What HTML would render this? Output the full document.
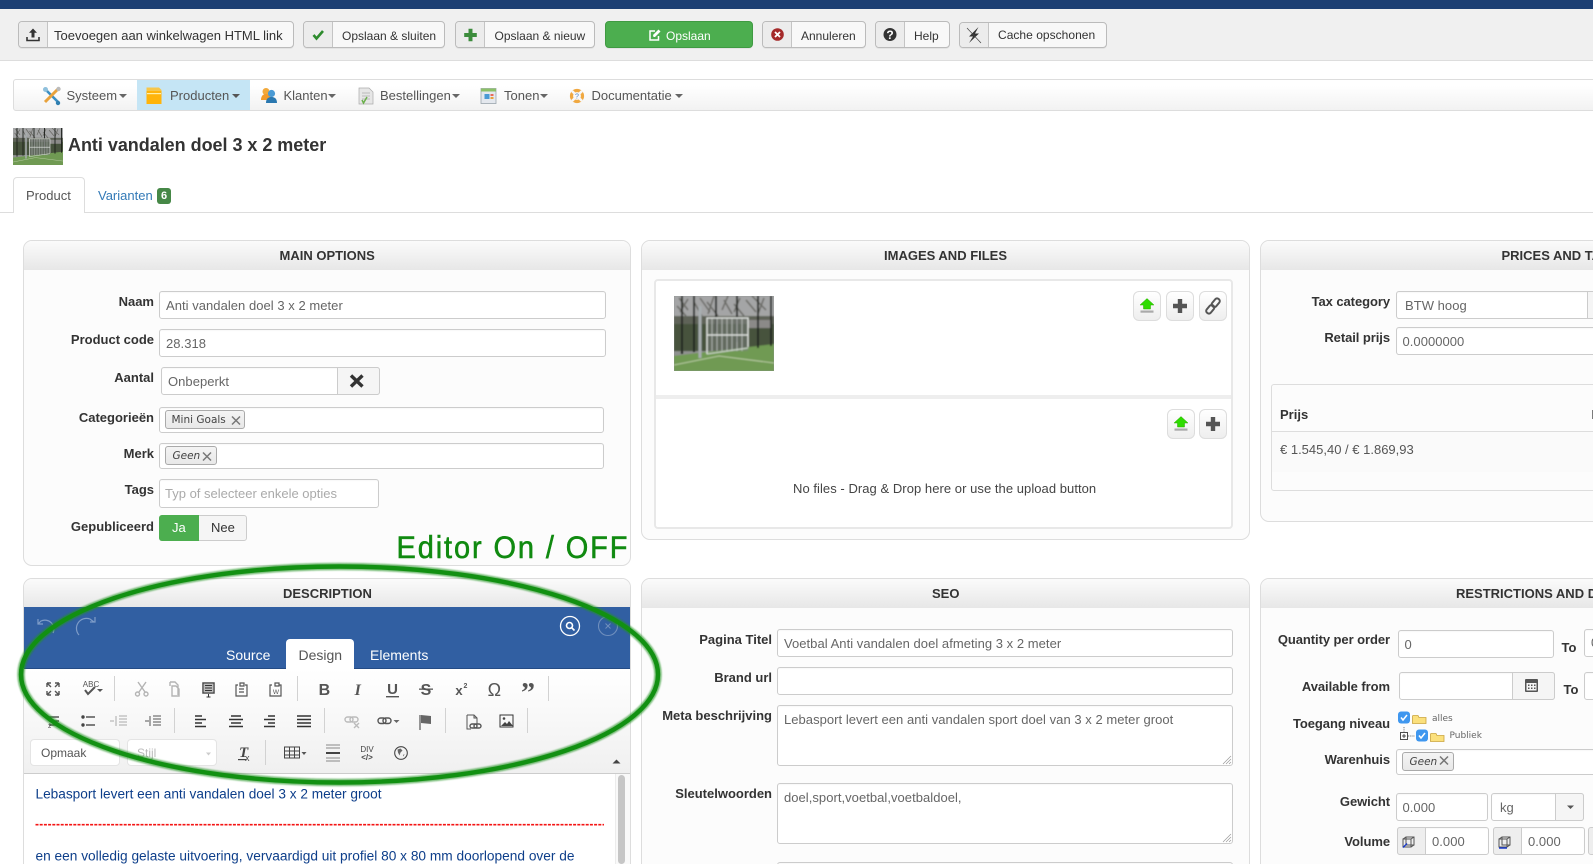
<!DOCTYPE html>
<html lang="nl"><head><meta charset="utf-8"><title>Anti vandalen doel 3 x 2 meter</title>
<style>
html,body{margin:0;padding:0;background:#fff;width:1593px;height:864px;overflow:hidden}
body{font-family:"Liberation Sans",Arial,sans-serif;font-size:13px;color:#333}
div,span{position:absolute;box-sizing:border-box}
#r{left:0;top:0;width:1593px;height:864px;overflow:hidden;background:#fff}
.t{white-space:nowrap;line-height:20px;height:20px}
.btn{height:27px;top:21px;border:1px solid #bbb;border-radius:4px;background:#f8f8f8;box-shadow:0 1px 0 rgba(0,0,0,.05)}
.ic{left:0;top:0;bottom:0;width:29px;background:#ececec;border-right:1px solid #c4c4c4;border-radius:3px 0 0 3px}
.p{border:1px solid #ddd;border-radius:9px;background:#fcfcfc;overflow:hidden}
.h{left:0;right:0;top:0;height:28.5px;background:linear-gradient(#fbfbfb,#e7e7e7)}
.ht{top:5px;font-weight:bold;color:#333;line-height:20px;white-space:nowrap}
.i{border:1px solid #ccc;border-radius:3px;background:#fff;box-shadow:inset 0 1px 1px rgba(0,0,0,.03)}
.l{font-weight:bold;text-align:right;color:#333}
.lr{letter-spacing:-.07px}
.v{color:#666;letter-spacing:.04px}
.tag{border:1px solid #aaa;border-radius:3px;background:linear-gradient(#f4f4f4,#e8e8e8);font-family:"DejaVu Sans",sans-serif;font-size:10.5px;line-height:18px;color:#444;white-space:nowrap}
.sb{width:28px;height:30px;border:1px solid #ddd;border-radius:6px;background:linear-gradient(#fff,#eee)}
.nv{color:#555}
.sep{width:1px;height:25px;background:#d2d2d2}
</style></head>
<body>
<div id="r">
<!-- top -->
<div style="left:0;top:0;width:1593px;height:9px;background:#1c3f73"></div>
<div style="left:0;top:9px;width:1593px;height:52px;background:#f0f0f0;border-bottom:1px solid #ddd"></div>

<div class="btn" style="left:18px;width:276px"><div class="ic"></div></div>
<span class="t" style="left:54px;top:26px;font-size:13px;color:#333">Toevoegen aan winkelwagen HTML link</span>
<div class="btn" style="left:303px;width:142px"><div class="ic"></div></div>
<span class="t" style="left:342px;top:26px;font-size:12px;color:#333">Opslaan &amp; sluiten</span>
<div class="btn" style="left:455px;width:140px"><div class="ic"></div></div>
<span class="t" style="left:494.5px;top:26px;font-size:12px;color:#333">Opslaan &amp; nieuw</span>
<div class="btn" style="left:605px;width:148px;background:#4cae4f;border-color:#3f9a42"></div>
<span class="t" style="left:666px;top:26px;font-size:12px;color:#fff">Opslaan</span>
<div class="btn" style="left:762px;width:104px"><div class="ic"></div></div>
<span class="t" style="left:801px;top:26px;font-size:12px;color:#333">Annuleren</span>
<div class="btn" style="left:875px;width:75px"><div class="ic"></div></div>
<span class="t" style="left:914px;top:26px;font-size:12px;color:#333">Help</span>
<div class="btn" style="left:959px;width:148px;top:22px;height:26px"><div class="ic"></div></div>
<span class="t" style="left:998px;top:24.5px;font-size:12px;letter-spacing:.03px;color:#333">Cache opschonen</span>

<!-- nav -->
<div style="left:13px;top:79px;width:1600px;height:32px;border:1px solid #ddd;border-radius:3px 0 0 3px;background:linear-gradient(#fff 20%,#f2f2f2)"></div>
<div style="left:137px;top:80px;width:113px;height:30px;background:#c5e5f5"></div>
<span class="t nv" style="left:66.5px;top:85.5px">Systeem</span>
<span class="t nv" style="left:170px;top:85.5px">Producten</span>
<span class="t nv" style="left:283.5px;top:85.5px">Klanten</span>
<span class="t nv" style="left:380px;top:85.5px">Bestellingen</span>
<span class="t nv" style="left:504px;top:85.5px">Tonen</span>
<span class="t nv" style="left:591.5px;top:85.5px">Documentatie</span>

<!-- title -->
<span class="t" style="left:68px;top:135px;font-size:18px;font-weight:bold;letter-spacing:-.03px;color:#333">Anti vandalen doel 3 x 2 meter</span>
<div style="left:0;top:212px;width:1593px;height:1px;background:#ddd"></div>
<div style="left:13px;top:177px;width:72px;height:36px;background:#fff;border:1px solid #ddd;border-bottom:0;border-radius:4px 4px 0 0"></div>
<span class="t" style="left:26px;top:186px;color:#555">Product</span>
<span class="t" style="left:98px;top:186px;color:#337ab7">Varianten</span>
<div style="left:157px;top:188px;width:14px;height:16px;background:#468847;border-radius:3px;color:#fff;font-size:11px;font-weight:bold;line-height:16px;text-align:center">6</div>

<!-- MAIN OPTIONS -->
<div class="p" style="left:23px;top:240px;width:608px;height:326px"><div class="h"></div></div>
<span class="ht" style="left:279.5px;top:246px">MAIN OPTIONS</span>
<div class="t l" style="left:30px;width:124px;top:292px">Naam</div>
<div class="t l" style="left:30px;width:124px;top:330px">Product code</div>
<div class="t l" style="left:30px;width:124px;top:368px">Aantal</div>
<div class="t l" style="left:30px;width:124px;top:408px">Categorieën</div>
<div class="t l" style="left:30px;width:124px;top:443.5px">Merk</div>
<div class="t l" style="left:30px;width:124px;top:480px">Tags</div>
<div class="t l" style="left:30px;width:124px;top:517px">Gepubliceerd</div>
<div class="i" style="left:159px;top:291px;width:447px;height:28px"></div>
<span class="t v" style="left:166px;top:295.5px">Anti vandalen doel 3 x 2 meter</span>
<div class="i" style="left:159px;top:329px;width:447px;height:28px"></div>
<span class="t v" style="left:166px;top:333.5px">28.318</span>
<div class="i" style="left:161px;top:367px;width:219px;height:28px"></div>
<div style="left:337px;top:367px;width:43px;height:28px;background:#f5f5f5;border:1px solid #ccc;border-radius:0 3px 3px 0"></div>
<span class="t v" style="left:168px;top:371.5px">Onbeperkt</span>
<div class="i" style="left:159px;top:407px;width:445px;height:26px"></div>
<div class="tag" style="left:165px;top:410px;width:80px;height:19px;padding-left:5.5px">Mini Goals</div>
<div class="i" style="left:159px;top:443px;width:445px;height:26px"></div>
<div class="tag" style="left:165px;top:446px;width:52px;height:19px;padding-left:6.5px;font-style:italic">Geen</div>
<div class="i" style="left:159px;top:479px;width:220px;height:29px"></div>
<span class="t" style="left:165px;top:483.5px;color:#aaa">Typ of selecteer enkele opties</span>
<div style="left:159px;top:515px;width:88px;height:26px;border:1px solid #ccc;border-radius:3px;background:#f5f5f5"></div>
<div style="left:159px;top:515px;width:40px;height:26px;background:#4cae4f;border-radius:3px 0 0 3px"></div>
<span class="t" style="left:172px;top:518px;color:#fff">Ja</span>
<span class="t" style="left:211px;top:518px;color:#333">Nee</span>

<!-- IMAGES -->
<div class="p" style="left:641px;top:240px;width:609px;height:300px"><div class="h"></div></div>
<span class="ht" style="left:884px;top:246px">IMAGES AND FILES</span>
<div style="left:654px;top:279px;width:579px;height:250px;background:#fff;border:2px solid #e8e8e8;border-radius:4px"></div>
<div style="left:656px;top:395px;width:575px;height:4px;background:#eee"></div>
<div class="sb" style="left:1133px;top:291px"></div>
<div class="sb" style="left:1166px;top:291px"></div>
<div class="sb" style="left:1199px;top:291px"></div>
<div class="sb" style="left:1167px;top:409px"></div>
<div class="sb" style="left:1199px;top:409px"></div>
<span class="t" style="left:793px;top:478.5px;color:#444;letter-spacing:.05px">No files - Drag &amp; Drop here or use the upload button</span>

<!-- PRICES -->
<div class="p" style="left:1260px;top:240px;width:620px;height:282px"><div class="h"></div></div>
<span class="ht" style="left:1501.5px;top:246px">PRICES AND TAXES</span>
<div class="t l lr" style="left:1270px;width:120px;top:292px">Tax category</div>
<div class="t l lr" style="left:1270px;width:120px;top:328px">Retail prijs</div>
<div class="i" style="left:1396px;top:291px;width:300px;height:28px"></div>
<div style="left:1587px;top:291px;width:20px;height:28px;background:#f5f5f5;border-left:1px solid #ccc;border-top:1px solid #ccc;border-bottom:1px solid #ccc"></div>
<span class="t v" style="left:1405px;top:295.5px">BTW hoog</span>
<div class="i" style="left:1396px;top:327px;width:300px;height:28px"></div>
<span class="t v" style="left:1402.5px;top:331.5px">0.0000000</span>
<div style="left:1271px;top:384px;width:400px;height:107px;border:1px solid #ddd;border-radius:3px"></div>
<div style="left:1272px;top:431px;width:400px;height:41px;background:#fafafa;border-top:1px solid #ddd"></div>
<span class="t" style="left:1280px;top:404.5px;font-weight:bold">Prijs</span>
<span class="t" style="left:1591.5px;top:404.5px;font-weight:bold">Korting</span>
<span class="t" style="left:1280px;top:439.5px;color:#555">€ 1.545,40 / € 1.869,93</span>

<!-- DESCRIPTION -->
<div class="p" style="left:23px;top:578px;width:608px;height:300px;background:#fff"><div class="h"></div></div>
<span class="ht" style="left:283px;top:583.5px">DESCRIPTION</span>
<div style="left:24px;top:607px;width:606px;height:62px;background:#315fa2;border-bottom:1px solid #244b85"></div>
<span class="t" style="left:226px;top:645px;font-size:14px;color:#fff">Source</span>
<div style="left:286px;top:639px;width:68px;height:30px;background:#fff;border-radius:4px 4px 0 0"></div>
<span class="t" style="left:298.5px;top:645px;font-size:14px;color:#555">Design</span>
<span class="t" style="left:370px;top:645px;font-size:14px;color:#fff">Elements</span>
<div style="left:24px;top:669px;width:606px;height:105px;background:linear-gradient(#fff,#f0f0f0);border-bottom:1px solid #ccc"></div>
<div class="sep" style="left:113.5px;top:676px"></div>
<div class="sep" style="left:296.5px;top:676px"></div>
<div class="sep" style="left:547.5px;top:676px"></div>
<div class="sep" style="left:174px;top:708px"></div>
<div class="sep" style="left:323.5px;top:708px"></div>
<div class="sep" style="left:445px;top:708px"></div>
<div class="sep" style="left:526.5px;top:708px"></div>
<div class="sep" style="left:264.5px;top:740px"></div>
<div style="left:29.5px;top:739px;width:90px;height:27px;background:#fff;border:1px solid #e4e4e4;border-radius:4px"></div>
<span class="t" style="left:41px;top:742.5px;font-size:12px;color:#555">Opmaak</span>
<div style="left:126.5px;top:739px;width:90px;height:27px;background:#fff;border:1px solid #e4e4e4;border-radius:4px"></div>
<span class="t" style="left:137px;top:742.5px;font-size:12px;color:#bbb">Stijl</span>
<div style="left:615px;top:774px;width:15px;height:90px;background:#f9f9f9;border-left:1px solid #ececec"></div>
<div style="left:618px;top:775px;width:7px;height:89px;background:#c6c6c6;border-radius:4px"></div>

<!-- SEO -->
<div class="p" style="left:641px;top:578px;width:609px;height:300px"><div class="h"></div></div>
<span class="ht" style="left:932px;top:583.5px">SEO</span>
<div class="t l" style="left:650px;width:122px;top:630px">Pagina Titel</div>
<div class="t l" style="left:650px;width:122px;top:668px">Brand url</div>
<div class="t l" style="left:650px;width:122px;top:706px">Meta beschrijving</div>
<div class="t l" style="left:650px;width:122px;top:784px">Sleutelwoorden</div>
<div class="i" style="left:777px;top:629px;width:455.5px;height:28px"></div>
<span class="t v" style="left:784px;top:633.5px">Voetbal Anti vandalen doel afmeting 3 x 2 meter</span>
<div class="i" style="left:777px;top:667px;width:455.5px;height:28px"></div>
<div class="i" style="left:777px;top:705px;width:455.5px;height:61px"></div>
<span class="t v" style="left:784px;top:709.5px">Lebasport levert een anti vandalen sport doel van 3 x 2 meter groot</span>
<div class="i" style="left:777px;top:783px;width:455.5px;height:61px"></div>
<span class="t v" style="left:784px;top:787.5px">doel,sport,voetbal,voetbaldoel,</span>
<div class="i" style="left:777px;top:861.500px;width:455.5px;height:30px"></div>

<!-- RESTRICTIONS -->
<div class="p" style="left:1260px;top:578px;width:620px;height:300px"><div class="h"></div></div>
<span class="ht" style="left:1456px;top:583.5px">RESTRICTIONS AND DISCOUNTS</span>
<div class="t l lr" style="left:1260px;width:130px;top:630px">Quantity per order</div>
<div class="t l lr" style="left:1260px;width:130px;top:677px">Available from</div>
<div class="t l lr" style="left:1260px;width:130px;top:714px">Toegang niveau</div>
<div class="t l lr" style="left:1260px;width:130px;top:750px">Warenhuis</div>
<div class="t l lr" style="left:1260px;width:130px;top:792px">Gewicht</div>
<div class="t l lr" style="left:1260px;width:130px;top:832px">Volume</div>
<div class="i" style="left:1398px;top:630px;width:156px;height:28px"></div>
<span class="t v" style="left:1404.5px;top:634.5px">0</span>
<span class="t" style="left:1561.5px;top:638px;font-weight:bold">To</span>
<div class="i" style="left:1584px;top:629px;width:100px;height:28px"></div>
<span class="t v" style="left:1591px;top:633px">0</span>
<div class="i" style="left:1399px;top:672px;width:156px;height:28px"></div>
<div style="left:1512px;top:672px;width:43px;height:28px;background:#f5f5f5;border:1px solid #ccc;border-radius:0 3px 3px 0"></div>
<span class="t" style="left:1563.5px;top:680px;font-weight:bold">To</span>
<div class="i" style="left:1584px;top:672px;width:100px;height:28px"></div>
<span class="t" style="left:1432px;top:708.5px;font-family:'DejaVu Sans',sans-serif;font-size:9px;color:#666">alles</span>
<span class="t" style="left:1449.5px;top:725.5px;font-family:'DejaVu Sans',sans-serif;font-size:9px;color:#666">Publiek</span>
<div class="i" style="left:1396px;top:749px;width:300px;height:26px"></div>
<div class="tag" style="left:1402px;top:752px;width:52px;height:19px;padding-left:6.5px;font-style:italic">Geen</div>
<div class="i" style="left:1396px;top:793px;width:92px;height:28px"></div>
<span class="t v" style="left:1402.5px;top:797.5px">0.000</span>
<div class="i" style="left:1491px;top:793px;width:93px;height:28px"></div>
<div style="left:1555px;top:793px;width:29px;height:28px;background:#f5f5f5;border:1px solid #ccc;border-radius:0 3px 3px 0"></div>
<span class="t v" style="left:1500px;top:797.5px">kg</span>
<div class="i" style="left:1397px;top:827px;width:92px;height:28px"></div>
<div style="left:1397px;top:827px;width:29px;height:28px;background:#eee;border:1px solid #ccc;border-radius:3px 0 0 3px"></div>
<span class="t v" style="left:1432px;top:831.5px">0.000</span>
<div class="i" style="left:1493px;top:827px;width:92px;height:28px"></div>
<div style="left:1493px;top:827px;width:29px;height:28px;background:#eee;border:1px solid #ccc;border-radius:3px 0 0 3px"></div>
<span class="t v" style="left:1528px;top:831.5px">0.000</span>
<div style="left:1588px;top:827px;width:29px;height:28px;background:#eee;border:1px solid #ccc;border-radius:3px 0 0 3px"></div>

<!-- icons / overlay -->
<svg width="1593" height="864" viewBox="0 0 1593 864" style="position:absolute;left:0;top:0" xmlns="http://www.w3.org/2000/svg">
<defs>
<filter id="bl" x="-5%" y="-5%" width="110%" height="110%"><feGaussianBlur stdDeviation=".7"/></filter>
<filter id="sf" x="-5%" y="-10%" width="110%" height="120%"><feGaussianBlur stdDeviation=".9"/></filter>
<symbol id="goal" viewBox="0 0 100 75" preserveAspectRatio="none">
 <rect width="100" height="75" fill="#8f9290"/>
 <g filter="url(#bl)">
 <rect y="0" width="100" height="20" fill="#a4a5a6"/>
 <path d="M5 2L14 14M14 3L6 16M26 2L36 16M40 0L34 18M50 4L58 18M66 2L60 16M72 4L82 16M90 2L84 18M20 6L28 20M54 0L48 14M3 10L12 20M33 6L44 20M60 8L70 20M78 0L92 14" stroke="#55564f" stroke-width="1.500" stroke-opacity=".75"/>
 <rect y="20" width="100" height="10" fill="#5f6459"/>
 <rect y="28" width="100" height="27" fill="#47533d"/>
 <rect x="74" y="24" width="24" height="8" fill="#8b8a88"/>
 <path d="M0 60L33 56L100 48V75H0Z" fill="#6f9a52"/>
 <path d="M0 69L45 60M45 60L100 67" stroke="#c9d6b4" stroke-width=".8" fill="none"/>
 <path d="M8 0V58M20 0V56M42 0V36M63 0V46M84 0V52M97 0V50" stroke="#1d211c" stroke-width="1.800"/>
 <path d="M26 10V62" stroke="#a8aeb0" stroke-width="3"/>
 <rect x="33" y="22" width="41" height="33" fill="#7d827f" fill-opacity=".5"/>
 <path d="M38 22V55M43 22V55M48 22V55M53 22V55M58 22V55M63 22V55M68 22V55" stroke="#bfc3c0" stroke-width=".8"/>
 <path d="M33 58V22H74V51M33 39H74" stroke="#e4e7e4" stroke-width="1.300" fill="none"/>
 <path d="M74 52L33 58" stroke="#d6dad6" stroke-width="1"/>
 </g>
</symbol>
<g id="upg"><path d="M0-7.500L7-1H3.500V3H-3.500V-1H-7Z" fill="#2edc00" stroke="#2aa800" stroke-width=".5"/><rect x="-6.500" y="4.500" width="13" height="2.200" fill="#aaa"/></g>
<path id="plusg" d="M-2.200-7H2.200V-2.200H7V2.200H2.200V7H-2.200V2.200H-7V-2.200H-2.200Z"/>
</defs>

<use href="#goal" x="13" y="128" width="50" height="37"/>
<use href="#goal" x="674" y="296" width="100" height="75"/>

<!-- toolbar icons -->
<g transform="translate(33,35)"><path d="M0-6.500L-4-2.200H-1.500V2.500H1.500V-2.200H4Z" fill="#333"/><path d="M-6 2V5.500H6V2" fill="none" stroke="#333" stroke-width="1.600"/></g>
<path d="M313.500 35L316.500 38.500L323 31" fill="none" stroke="#2e8b2e" stroke-width="2.600"/>
<use href="#plusg" transform="translate(470.500,35) scale(.9)" fill="#3c8c3c"/>
<g transform="translate(655,35)" fill="none" stroke="#fff"><path d="M3.500 1V5H-5V-4H0" stroke-width="1.500"/><path d="M-1.500 2L-2 0L3.500-5.500L5.500-3.500L0 2Z" fill="#fff" stroke="none"/></g>
<circle cx="777.500" cy="34.500" r="6.300" fill="#a52a2a"/><path d="M775 32L780 37M780 32L775 37" stroke="#fff" stroke-width="1.800"/>
<circle cx="890" cy="34.500" r="6.500" fill="#333"/><text x="890" y="38.800" font-size="12" font-weight="bold" text-anchor="middle" fill="#fff" font-family="Liberation Sans">?</text>
<g transform="translate(974,35)"><path d="M4.500-8L-5 1.500H-1L-5 8L5-1.500H1Z" fill="#333"/><path d="M-7-7L7 8" stroke="#444" stroke-width=".7"/></g>

<!-- nav icons -->
<g transform="translate(52,96)"><path d="M-8-8L7 7" stroke="#3b8fc4" stroke-width="2.600"/><path d="M7-8L-7 6" stroke="#e8a23c" stroke-width="3"/><circle cx="-6.500" cy="-6.500" r="2.500" fill="#8fc0dc"/><circle cx="6" cy="7" r="2.200" fill="#2f7fb0"/><circle cx="6.500" cy="-7" r="2.200" fill="#bbb"/></g>
<g transform="translate(154,96)"><rect x="-7.500" y="-5" width="15" height="13" fill="#ffb40a"/><path d="M-7.500-5V-8.500H5L7.500-6V-5Z" fill="#f6c64a"/><rect x="-7" y="-3" width="14" height="1.200" fill="#fff0a8"/></g>
<g transform="translate(269,95)"><circle cx="-3" cy="-3.500" r="3.500" fill="#f2a93b"/><path d="M-8 5C-8 0-5-1-3-1S2 0 2 5Z" fill="#f29b2a"/><circle cx="2.500" cy="-1.500" r="3.600" fill="#4a9ad4"/><path d="M-3 8C-3 3 0 2 2.500 2S8 3 8 8Z" fill="#2a78b0"/></g>
<g transform="translate(366,96)"><path d="M-7-8H3L7-4V8H-7Z" fill="#e6e6e6" stroke="#aaa" stroke-width=".7"/><path d="M-4-3H4M-4 0H4M-4 3H4" stroke="#aaa" stroke-width=".8"/><path d="M-4 4L-2.500 7L1 1" stroke="#6ab04a" stroke-width="1.500" fill="none"/></g>
<g transform="translate(488.500,96)"><rect x="-7.500" y="-7.500" width="15" height="15" fill="#e4e8ee" stroke="#9aa4ac" stroke-width=".8"/><rect x="-7.500" y="-7.500" width="15" height="3" fill="#8cc068"/><rect x="-4" y="-2" width="5" height="5" fill="#4a9ad4"/><rect x="2" y="-2" width="3" height="2" fill="#e86a5a"/><rect x="2" y="1" width="3" height="2" fill="#e8a23c"/></g>
<g transform="translate(577,96)"><circle r="5.500" fill="none" stroke="#f0a840" stroke-width="3.200"/><path d="M-5-5L-2-2M5-5L2-2M-5 5L-2 2M5 5L2 2" stroke="#f7f7f7" stroke-width="2.600"/><text y="2.500" font-size="7" text-anchor="middle" fill="#4a80c0" font-family="Liberation Sans">?</text></g>
<g fill="#666">
<path d="M119 94h8l-4 4z"/><path d="M232 94h8l-4 4z" fill="#555"/><path d="M328 94h8l-4 4z"/><path d="M452 94h8l-4 4z"/><path d="M540 94h8l-4 4z"/><path d="M675 94h8l-4 4z"/>
</g>

<!-- small buttons -->
<g transform="translate(1147,306)"><use href="#upg"/></g>
<use href="#plusg" transform="translate(1180,306)" fill="#555"/>
<g transform="translate(1213,306) rotate(-50)" fill="none" stroke="#555" stroke-width="2"><rect x="-9" y="-2.600" width="9.500" height="5.200" rx="2.400"/><rect x="-.5" y="-2.600" width="9.500" height="5.200" rx="2.400"/></g>
<g transform="translate(1181,424)"><use href="#upg"/></g>
<use href="#plusg" transform="translate(1213,424)" fill="#555"/>

<!-- aantal x, tag x -->
<path d="M351 375.500L362.500 386.500M362.500 375.500L351 386.500" stroke="#333" stroke-width="3.400"/>
<path d="M232 416.500L240 424.500M240 416.500L232 424.500M203 452.500L211 460.500M211 452.500L203 460.500M1440 756.500L1448 764.500M1448 756.500L1440 764.500" stroke="#777" stroke-width="1.500"/>

<!-- editor header -->
<g fill="none" stroke="#7e9cc8" stroke-width="1.200"><path d="M53 633A9 9 0 0 0 41 621L38 624M38 619V624H43"/><path d="M79 635A10 10 0 0 1 90 619L94 622M95 617V622H90"/></g>
<circle cx="570" cy="626" r="9.500" fill="none" stroke="#fff" stroke-width="1.300"/><circle cx="569.500" cy="625.500" r="3" fill="none" stroke="#fff" stroke-width="1.600"/><path d="M572 628L574.500 630.500" stroke="#fff" stroke-width="1.600"/>
<circle cx="608" cy="626" r="9.500" fill="none" stroke="#6f8fbd" stroke-width="1.100"/><path d="M605.500 623.500L610.500 628.500M610.500 623.500L605.500 628.500" stroke="#6f8fbd"/>

<!-- editor row 1 -->
<rect x="202" y="682" width="13" height="12" fill="#bcbcbc"/>
<g fill="none" stroke="#555" stroke-width="1.400">
<path d="M47 683h4M47 683v4M59 683h-4M59 683v4M47 695h4M47 695v-4M59 695h-4M59 695v-4M47 683l4 4M59 683l-4 4M47 695l4-4M59 695l-4-4"/>
<path d="M85 690l3 4 7-7" stroke-width="2"/>
<g stroke="#b4b4b4"><path d="M138 682L145 692M146 682L139 692"/><circle cx="137.500" cy="694" r="2"/><circle cx="146" cy="694" r="2"/><path d="M170 682h5l3 3v10M170 682v4M172 686h4l3 3v7h-7Z"/></g>
<path d="M203 683h11v10h-11ZM205 685.500h7M205 688h7M205 690.500h7M208.500 694v3M206.500 697h4" stroke="#333" stroke-width="1"/>
<path d="M238 685h-2v11h11v-11h-2M240 683h4v3h-4ZM239 689h5M239 692h5" stroke-width="1.200"/>
<path d="M272 685h-2v11h11v-11h-2M275 683h4v3h-4Z" stroke-width="1.200"/>
</g>
<text x="91" y="687" font-size="8" text-anchor="middle" fill="#555" font-family="Liberation Sans">ABC</text>
<text x="276" y="694" font-size="6.500" text-anchor="middle" fill="#555" font-family="Liberation Sans">W</text>
<path d="M97 689h6l-3 3z" fill="#555"/>
<g fill="#555" font-family="Liberation Serif" text-anchor="middle">
<text x="324.400" y="695" font-size="16" font-weight="bold" font-family="Liberation Sans">B</text>
<text x="357.800" y="695" font-size="16" font-style="italic" font-weight="bold">I</text>
<text x="392.500" y="694" font-size="15" font-weight="bold" font-family="Liberation Sans">U</text><rect x="386" y="696" width="13" height="1.400"/>
<text x="426" y="695" font-size="16" font-weight="bold" font-family="Liberation Sans">S</text><rect x="419" y="688.500" width="14" height="1.300"/>
<text x="459" y="695" font-size="13" font-weight="bold" font-family="Liberation Sans">x</text><text x="465.500" y="688" font-size="7" font-weight="bold" font-family="Liberation Sans">2</text>
<text x="494.400" y="696" font-size="18" font-family="Liberation Sans">Ω</text>
<text x="528" y="702" font-size="28" font-weight="bold">”</text>
</g>

<!-- editor row 2 -->
<g transform="translate(0,-1)">
<g stroke="#555" stroke-width="1.400" fill="none">
<path d="M49 718h10M49 722h10M49 726h10"/>
<path d="M86 718h9M86 726h9"/>
<g stroke="#aaa" stroke-width="1"><path d="M116 717v10M119 717h8M119 720h8M119 723h8M119 726h8M114 722h-4"/></g>
<path d="M150 717v10M153 717h8M153 720h8M153 723h8M153 726h8M145 722h4" stroke-width="1"/>
<g stroke="#333" stroke-width="1.600"><path d="M195 717h7M195 720.500h11M195 724h7M195 727.500h11"/><path d="M231 717h10M229 720.500h14M231 724h10M229 727.500h14"/><path d="M268 717h7M264 720.500h11M268 724h7M264 727.500h11"/><path d="M297 717h14M297 720.500h14M297 724h14M297 727.500h14"/></g>
<g stroke="#bbb"><rect x="345" y="718" width="8" height="5" rx="2.500"/><rect x="350" y="718" width="8" height="5" rx="2.500"/><path d="M354 724l5 5M359 724l-5 5"/></g>
<rect x="378" y="719" width="8" height="5.500" rx="2.700"/><rect x="383" y="719" width="8" height="5.500" rx="2.700"/>
<path d="M420 716v15" stroke-width="1.200"/>
<path d="M467 716h7l3 3v6M467 716v14h4M474 716v3h3" stroke-width="1"/><rect x="470" y="725" width="7" height="4" rx="2"/><rect x="474" y="725" width="7" height="4" rx="2"/>
<rect x="500" y="716" width="13" height="12" stroke-width="1" stroke="#333"/>
</g>
<path d="M421 716l10 1v8l-10-1Z" fill="#666"/>
<path d="M393.500 721h6l-3 3z" fill="#666"/>
<path d="M501 727l4-4 2 2 2-3 4 5Z" fill="#444"/><circle cx="504" cy="719.500" r="1.300" fill="#444"/>
<circle cx="83" cy="718" r="1.700" fill="#444"/><circle cx="83" cy="726" r="1.700" fill="#444"/>
<text x="48" y="729" font-size="6" fill="#444" font-family="Liberation Sans">2</text>
</g>

<!-- editor row 3 -->
<path d="M206 752.500h5l-2.500 3z" fill="#ccc"/>
<g fill="#444" font-family="Liberation Serif"><text x="239" y="757" font-size="15" font-style="italic" font-weight="bold">T</text><text x="245" y="761" font-size="9" font-family="Liberation Sans">x</text><rect x="238" y="759" width="8" height="1.200"/></g>
<g fill="none" stroke="#444" stroke-width="1"><rect x="284.500" y="747" width="15" height="11"/><path d="M284.500 751h15M284.500 755h15M289.500 747v11M294.500 747v11"/>
<path d="M326 745h14M326 748h14M326 758h14M326 761h14" stroke="#888"/></g>
<rect x="326" y="752" width="14" height="2" fill="#444"/>
<path d="M301.500 752h5l-2.500 3z" fill="#555"/>
<text x="367" y="752" font-size="8" text-anchor="middle" fill="#444" font-family="Liberation Sans">DIV</text>
<text x="367" y="760" font-size="8" text-anchor="middle" fill="#444" font-family="Liberation Sans" font-weight="bold">&lt;/&gt;</text>
<circle cx="401" cy="753" r="6.300" fill="none" stroke="#444" stroke-width="1.100"/><path d="M397.500 749.500l3-1 2 2-2 2-1 3-1.500-3ZM403 755l1.500-1-1 2.500Z" fill="#666"/>
<path d="M612.500 763.500h8l-4-4z" fill="#444"/>

<!-- restrictions icons -->
<g fill="#555"><rect x="1525" y="679" width="13" height="13" rx="1" fill="#555"/><rect x="1526.500" y="683" width="10" height="7.500" fill="#f5f5f5"/><path d="M1528 684.500h1.500v1.500h-1.500ZM1531 684.500h1.500v1.500h-1.500ZM1534 684.500h1.500v1.500h-1.500ZM1528 687.500h1.500v1.500h-1.500ZM1531 687.500h1.500v1.500h-1.500ZM1534 687.500h1.500v1.500h-1.500Z"/></g>
<g><rect x="1398" y="711.500" width="12" height="12" rx="3" fill="#3f97ef"/><path d="M1401 717.500l2 2.500 4-5" fill="none" stroke="#fff" stroke-width="1.500"/>
<path d="M1412.500 716v7.500h13.500v-6h-7l-1-2h-5Z" fill="#fbe07c" stroke="#c9a23c" stroke-width=".8"/>
<rect x="1416" y="729.500" width="12" height="12" rx="3" fill="#3f97ef"/><path d="M1419 735.500l2 2.500 4-5" fill="none" stroke="#fff" stroke-width="1.500"/>
<path d="M1430.500 734v7.500h13.500v-6h-7l-1-2h-5Z" fill="#fbe07c" stroke="#c9a23c" stroke-width=".8"/>
<rect x="1400.500" y="732.500" width="7" height="7" fill="#fff" stroke="#222" stroke-width=".8"/><path d="M1402 736h4M1404 734v4" stroke="#222" stroke-width=".8"/><path d="M1408 736h7M1404 727v5" stroke="#444" stroke-width=".7" stroke-dasharray="1 .8"/></g>
<path d="M1567 805.500h7l-3.500 3.500z" fill="#555"/>
<g fill="none" stroke="#555" stroke-width="1"><rect x="1406" y="837" width="8" height="8"/><rect x="1403" y="839" width="8" height="8"/><path d="M1403 839l3-2M1411 839l3-2M1411 847l3-2"/><rect x="1502" y="837" width="8" height="8"/><rect x="1499" y="839" width="8" height="8"/><path d="M1499 839l3-2M1507 839l3-2M1507 847l3-2"/></g>
<path d="M1403 847.500l4-4" stroke="#1a3acc" stroke-width="1.300"/><path d="M1499 848h8" stroke="#1a3acc" stroke-width="1.500"/>

<!-- resize grips -->
<path d="M1223 764l8-8M1226 764l5-5M1229 764l2-2M1223 842l8-8M1226 842l5-5M1229 842l2-2" stroke="#999" stroke-width=".7"/>

<!-- editor content -->
<text x="35.500" y="798.500" font-size="13.500" fill="#0d3e8a" font-family="Liberation Sans" textLength="346" lengthAdjust="spacingAndGlyphs">Lebasport levert een anti vandalen doel 3 x 2 meter groot</text>
<line x1="35.500" y1="824.700" x2="604" y2="824.700" stroke="#f41414" stroke-width="1.600" stroke-dasharray="3 1.200"/>
<text x="35.500" y="860.500" font-size="13.500" fill="#0d3e8a" font-family="Liberation Sans" textLength="539" lengthAdjust="spacingAndGlyphs">en een volledig gelaste uitvoering, vervaardigd uit profiel 80 x 80 mm doorlopend over de</text>

<!-- annotation -->
<ellipse cx="339.500" cy="674.500" rx="318.500" ry="108" fill="none" stroke="#1b931b" stroke-opacity=".6" stroke-width="7.500" filter="url(#sf)"/>
<ellipse cx="339.500" cy="674.500" rx="318.500" ry="108" fill="none" stroke="#129012" stroke-width="4.400"/>
<g transform="translate(396.500,558) scale(.92,1)"><text x="0" y="0" font-size="31.500" fill="#108a10" stroke="#108a10" stroke-width=".55" font-family="Liberation Sans" textLength="251" lengthAdjust="spacing">Editor On / OFF</text></g>
</svg>
</div>
</body></html>
